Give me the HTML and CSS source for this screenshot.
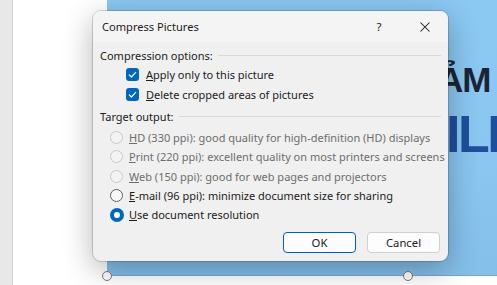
FILE: index.html
```html
<!DOCTYPE html>
<html lang="en">
<head>
<meta charset="utf-8">
<title>Compress Pictures</title>
<link rel="stylesheet" href="styles.css">
</head>
<body>
<div class="app">
  <div class="rail"></div>
  <div class="doc">
    <div class="picture">
      <div class="pic-clip">
        <span class="pic-text pic-top">ẢM</span>
        <span class="pic-text pic-big">ILE</span>
      </div>
      <span class="handle handle-bl"></span>
      <span class="handle handle-bm"></span>
    </div>
  </div>
</div>

<div class="dialog">
  <div class="titlebar">
    <span class="title">Compress Pictures</span>
    <span class="tb-btn help">?</span>
    <span class="tb-btn close">
      <svg width="10" height="10" viewBox="0 0 10 10"><path d="M0.5 0.5 L9.5 9.5 M9.5 0.5 L0.5 9.5" stroke="#1b1b1b" stroke-width="1.05" fill="none"/></svg>
    </span>
  </div>
  <div class="content">
    <div class="group-head"><span>Compression options:</span><span class="rule"></span></div>
    <div class="check-row">
      <span class="checkbox"><svg width="13" height="13" viewBox="0 0 13 13"><rect x="0" y="0" width="13" height="13" rx="3" fill="#0067c0"/><path d="M3.3 6.9 L5.4 9 L9.7 4.4" stroke="#fff" stroke-width="1.25" fill="none" stroke-linecap="round" stroke-linejoin="round"/></svg></span>
      <span><u>A</u>pply only to this picture</span>
    </div>
    <div class="check-row">
      <span class="checkbox"><svg width="13" height="13" viewBox="0 0 13 13"><rect x="0" y="0" width="13" height="13" rx="3" fill="#0067c0"/><path d="M3.3 6.9 L5.4 9 L9.7 4.4" stroke="#fff" stroke-width="1.25" fill="none" stroke-linecap="round" stroke-linejoin="round"/></svg></span>
      <span><u>D</u>elete cropped areas of pictures</span>
    </div>
    <div class="group-head second"><span>Target output:</span><span class="rule"></span></div>
    <div class="radios">
      <div class="radio-row disabled"><span class="radio"></span><span><u>H</u>D (330 ppi): good quality for high-definition (HD) displays</span></div>
      <div class="radio-row disabled"><span class="radio"></span><span><u>P</u>rint (220 ppi): excellent quality on most printers and screens</span></div>
      <div class="radio-row disabled"><span class="radio"></span><span><u>W</u>eb (150 ppi): good for web pages and projectors</span></div>
      <div class="radio-row"><span class="radio"></span><span><u>E</u>-mail (96 ppi): minimize document size for sharing</span></div>
      <div class="radio-row"><span class="radio selected"></span><span><u>U</u>se document resolution</span></div>
    </div>
    <div class="buttons">
      <button class="btn primary">OK</button>
      <button class="btn">Cancel</button>
    </div>
  </div>
</div>
</body>
</html>
```

FILE: styles.css
```css
html, body {
  margin: 0;
  padding: 0;
}
body {
  width: 497px;
  height: 285px;
  overflow: hidden;
  position: relative;
  background: #ffffff;
  font-family: "Noto Sans", "Open Sans", sans-serif;
  font-size: 11px;
  color: #1b1b1b;
}
.app {
  display: flex;
  height: 285px;
}
.rail {
  flex: none;
  width: 12px;
  background: #e8e8e8;
  border-right: 1px solid #d3d3d3;
}
.doc {
  flex: 1;
  min-width: 0;
  background: #ffffff;
  padding-left: 94px;
}
.picture {
  position: relative;
  height: 276px;
  margin-right: -10px;
  background: linear-gradient(180deg, #8bc8f2 0%, #8ac6f0 60%, #84bfea 100%);
  border-bottom: 1px solid #7aa6c8;
  box-sizing: border-box;
}
.pic-clip {
  position: absolute;
  inset: 0;
  overflow: hidden;
}
.pic-text {
  position: absolute;
  font-family: "Liberation Sans", Arial, sans-serif;
  font-weight: bold;
  white-space: nowrap;
  line-height: 1;
}
.pic-top {
  left: 331px;
  top: 62px;
  font-size: 35px;
  letter-spacing: -1px;
  color: #1b2336;
}
.pic-big {
  left: 339px;
  top: 108px;
  font-size: 52px;
  letter-spacing: -2.5px;
  color: #1d4f9c;
}
.handle {
  position: absolute;
  width: 8px;
  height: 8px;
  border-radius: 50%;
  background: #ffffff;
  border: 1.5px solid #7b7b7b;
  bottom: -6px;
}
.handle-bl { left: -5px; }
.handle-bm { left: 296px; }

.dialog {
  position: absolute;
  left: 93px;
  top: 11px;
  width: 355px;
  height: 250px;
  border-radius: 8px;
  background: #f0f0f0;
  box-shadow: 0 0 0 1px rgba(0, 0, 0, 0.16), 0 8px 30px rgba(0, 0, 0, 0.30);
  display: flex;
  flex-direction: column;
  overflow: hidden;
}
.titlebar {
  height: 31px;
  flex: none;
  display: flex;
  align-items: center;
  padding-left: 9px;
  background: #f4f4f5;
}
.title {
  flex: 1;
  font-size: 11.1px;
}
.tb-btn {
  width: 46px;
  height: 31px;
  display: flex;
  align-items: center;
  justify-content: center;
  font-size: 11.5px;
}
.content {
  flex: 1;
  display: flex;
  flex-direction: column;
  padding: 0 7px 8px 7px;
}
.group-head {
  display: flex;
  align-items: center;
  height: 14px;
  margin-top: 6px;
  margin-bottom: 2px;
  white-space: nowrap;
}
.group-head.second {
  margin-top: 5px;
  margin-bottom: 1px;
}
.rule {
  flex: 1;
  height: 1px;
  background: #d9d9d9;
  margin-left: 5px;
}
.check-row {
  display: flex;
  align-items: center;
  height: 20px;
  padding-left: 26px;
  gap: 7px;
}
.checkbox {
  width: 13px;
  height: 13px;
  display: flex;
}
.radios {
  margin-top: 4px;
}
.radio-row {
  display: flex;
  align-items: center;
  height: 19.3px;
  padding-left: 10px;
  gap: 6px;
  white-space: nowrap;
}
.radio-row.disabled {
  color: #6d6d6d;
}
.radio {
  width: 13px;
  height: 13px;
  border-radius: 50%;
  box-sizing: border-box;
  border: 1px solid #5e5e5e;
  background: #f8f8f8;
  flex: none;
  position: relative;
}
.radio-row.disabled .radio {
  border-color: #c9c9c9;
  background: #f3f3f3;
}
.radio.selected {
  border: none;
  background: #0067c0;
  width: 14px;
  height: 14px;
  margin-left: -0.5px;
  margin-right: -0.5px;
}
.radio.selected::after {
  content: "";
  position: absolute;
  left: 4px;
  top: 4px;
  width: 6px;
  height: 6px;
  border-radius: 50%;
  background: #ffffff;
}
.buttons {
  margin-top: auto;
  display: flex;
  justify-content: flex-end;
  gap: 11px;
  padding-right: 1px;
}
.btn {
  width: 73px;
  height: 21px;
  box-sizing: border-box;
  border: 1px solid #d0d0d0;
  border-radius: 4px;
  background: #fdfdfd;
  font-family: inherit;
  font-size: 11.3px;
  color: #1b1b1b;
  padding: 0;
}
.btn.primary {
  border-color: #005fb8;
}
```
